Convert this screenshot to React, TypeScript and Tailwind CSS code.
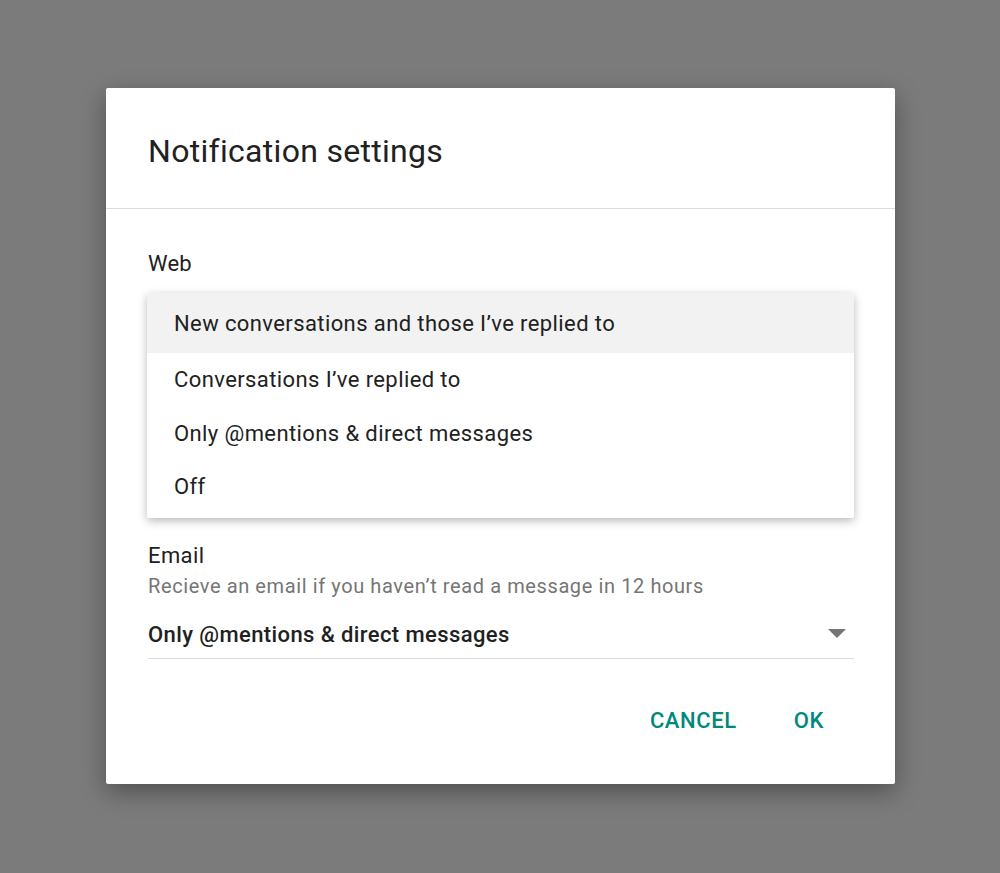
import React from "react";

const items: { t: string; h: string }[] = [
  { t: "New conversations and those I\u2019ve replied to", h: "h-[60px] bg-[#f2f2f2]" },
  { t: "Conversations I\u2019ve replied to", h: "h-[53px]" },
  { t: "Only @mentions & direct messages", h: "h-[54px]" },
  { t: "Off", h: "h-[52px]" },
];

export default function App() {
  return (
    <div
      className="h-[873px] w-[1000px] bg-[#7b7b7b] pt-[88px] pl-[106px]"
      style={{ fontFamily: "Roboto, 'Noto Sans', sans-serif" }}
    >
      <div className="w-[789px] h-[696px] bg-white rounded-[2px] shadow-[0_8px_24px_rgba(0,0,0,0.35)] flex flex-col">
        <div className="h-[121px] border-b border-[#dcdcdc] pl-[42px] pt-[43px]">
          <div className="text-[32px] leading-[40px] tracking-[0.3px] text-[#212121]">Notification settings</div>
        </div>
        <div className="pl-[42px] pr-[41px] pt-[43px]">
          <div className="text-[22px] leading-[24px] tracking-[0.2px] text-[#212121]">Web</div>
          <div className="relative h-[268px]">
            <div className="absolute left-[-1px] right-0 top-[17px] pb-[6px] bg-white rounded-[2px] shadow-[0_3px_10px_rgba(0,0,0,0.28)] overflow-hidden">
              {items.map((it, i) => (
                <div
                  key={i}
                  className={
                    "flex items-center pl-[27px] text-[22px] tracking-[0.4px] text-[#212121] " + it.h
                  }
                >
                  {it.t}
                </div>
              ))}
            </div>
          </div>
          <div className="text-[22px] leading-[24px] tracking-[0.4px] text-[#212121]">Email</div>
          <div className="mt-[6px] text-[20px] leading-[24px] tracking-[0.6px] text-[#757575]">
            Recieve an email if you haven{"\u2019"}t read a message in 12 hours
          </div>
          <div className="mt-[23px] flex items-center justify-between border-b border-[#dcdcdc] pb-[9px]">
            <div className="text-[22px] leading-[28px] tracking-[0.4px] font-medium text-[#212121]">
              Only @mentions &amp; direct messages
            </div>
            <svg width="18" height="10" viewBox="0 0 18 10" className="mr-[8px] mb-[2px]">
              <path d="M0 0 L18 0 L9 9 Z" fill="#757575" />
            </svg>
          </div>
        </div>
        <div className="flex justify-end gap-[25px] pr-[55px] mt-[43px]">
          <button className="h-[36px] px-4 text-[22px] font-medium text-[#00897b] tracking-[0.6px]">CANCEL</button>
          <button className="h-[36px] px-4 text-[22px] font-medium text-[#00897b] tracking-[0.6px]">OK</button>
        </div>
      </div>
    </div>
  );
}
